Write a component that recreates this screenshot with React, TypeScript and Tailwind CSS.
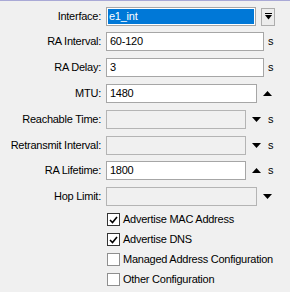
import type { ReactNode } from "react";

const font = { fontFamily: '"Liberation Sans", Arial, sans-serif' };

function Down() {
  return (
    <svg width="9" height="5" viewBox="0 0 9 5" className="block">
      <path d="M0 0H9L4.5 5Z" fill="#000" />
    </svg>
  );
}

function Up() {
  return (
    <svg width="9" height="5" viewBox="0 0 9 5" className="block">
      <path d="M0 5H9L4.5 0Z" fill="#000" />
    </svg>
  );
}

function Row({ label, mt, children }: { label: string; mt: string; children: ReactNode }) {
  return (
    <div className={`flex h-[19px] items-center ${mt}`}>
      <div className="w-[101px] shrink-0 text-right leading-[19px]">{label}</div>
      <div className="ml-[5px] flex h-full items-center">{children}</div>
    </div>
  );
}

function Field({ w, value, disabled }: { w: string; value?: string; disabled?: boolean }) {
  return (
    <div
      className={`flex h-[19px] items-center border pl-[3px] ${w} ${
        disabled ? "border-[#b4b4b4] bg-[#f0f0f0]" : "border-[#a6a6a6] bg-white"
      }`}
    >
      {value}
    </div>
  );
}

function Check({ label, checked, mt }: { label: string; checked?: boolean; mt?: string }) {
  return (
    <div className={`ml-[107px] flex h-[13px] items-center ${mt ?? ""}`}>
      <div
        className={`flex h-[13px] w-[13px] items-center justify-center border bg-white ${
          checked ? "border-[#333333]" : "border-[#8f8f8f]"
        }`}
      >
        {checked && (
          <svg width="9" height="8" viewBox="0 0 9 8" className="block">
            <path d="M1 4L3.5 6.5L8 1" stroke="#000" strokeWidth="1.6" fill="none" />
          </svg>
        )}
      </div>
      <span className="ml-[3px] leading-[13px]">{label}</span>
    </div>
  );
}

export default function App() {
  return (
    <div
      className="h-[292px] w-[290px] overflow-hidden border-t border-[#a9a9d6] bg-[#f0f0f0] pt-[6px] text-[11px] tracking-[-0.25px] text-black"
      style={font}
    >
      <Row label="Interface:" mt="">
        <div className="flex h-[19px] w-[150px] items-center border border-[#a6a6a6] bg-white p-px">
          <div className="flex h-full w-full items-center bg-[#0078d7] pl-[1px] text-white">e1_int</div>
        </div>
        <div className="ml-[5px] flex h-[18px] w-[14px] flex-col items-center justify-center border border-[#adadad] bg-[#ececec]">
          <div className="h-px w-[7px] bg-black" />
          <svg width="7" height="5" viewBox="0 0 7 5" className="mt-px block">
            <path d="M0 0H7L3.5 4.5Z" fill="#000" />
          </svg>
        </div>
      </Row>
      <Row label="RA Interval:" mt="mt-[6px]">
        <Field w="w-[158px]" value="60-120" />
        <span className="ml-[4px]">s</span>
      </Row>
      <Row label="RA Delay:" mt="mt-[7px]">
        <Field w="w-[158px]" value="3" />
        <span className="ml-[4px]">s</span>
      </Row>
      <Row label="MTU:" mt="mt-[7px]">
        <Field w="w-[151px]" value="1480" />
        <div className="ml-[6px]">
          <Up />
        </div>
      </Row>
      <Row label="Reachable Time:" mt="mt-[7px]">
        <Field w="w-[140px]" disabled />
        <div className="ml-[6px]">
          <Down />
        </div>
        <span className="ml-[7px]">s</span>
      </Row>
      <Row label="Retransmit Interval:" mt="mt-[7px]">
        <Field w="w-[140px]" disabled />
        <div className="ml-[6px]">
          <Down />
        </div>
        <span className="ml-[7px]">s</span>
      </Row>
      <Row label="RA Lifetime:" mt="mt-[6px]">
        <Field w="w-[140px]" value="1800" />
        <div className="ml-[6px]">
          <Up />
        </div>
        <span className="ml-[7px]">s</span>
      </Row>
      <Row label="Hop Limit:" mt="mt-[7px]">
        <Field w="w-[151px]" disabled />
        <div className="ml-[6px]">
          <Down />
        </div>
      </Row>
      <Check label="Advertise MAC Address" checked mt="mt-[7px]" />
      <Check label="Advertise DNS" checked mt="mt-[7px]" />
      <Check label="Managed Address Configuration" mt="mt-[7px]" />
      <Check label="Other Configuration" mt="mt-[7px]" />
    </div>
  );
}
